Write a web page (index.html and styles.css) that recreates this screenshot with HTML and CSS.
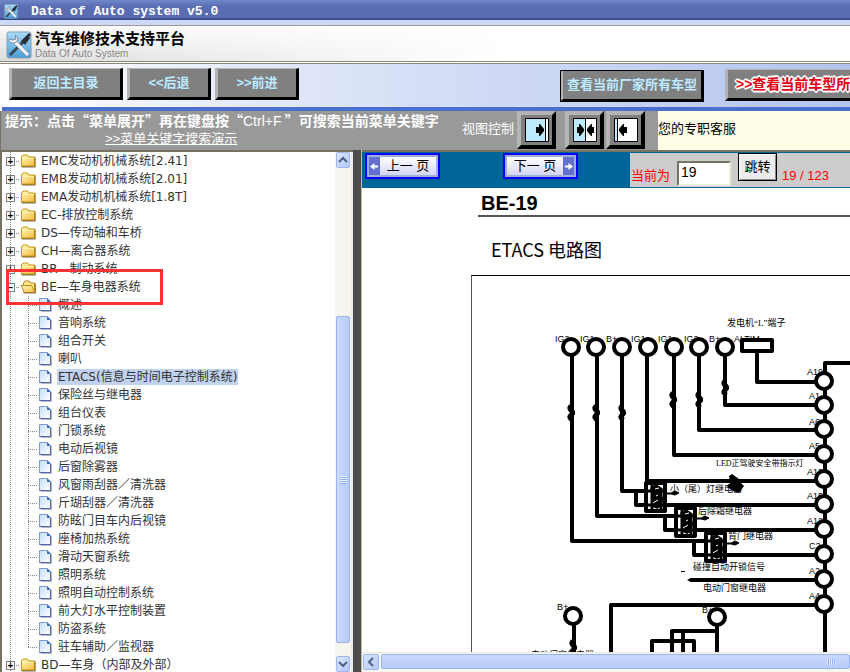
FILE: index.html
```
<!DOCTYPE html>
<html lang="zh-CN">
<head>
<meta charset="utf-8">
<title>Data of Auto system v5.0</title>
<link rel="stylesheet" href="styles.css">
</head>
<body>

<!-- Shared icons -->
<svg class="defs" xmlns="http://www.w3.org/2000/svg">
  <defs>
    <linearGradient id="folderFill" x1="0" y1="0" x2="1" y2="1">
      <stop offset="0" stop-color="#fffbc0"/>
      <stop offset="1" stop-color="#f3b93c"/>
    </linearGradient>
    <linearGradient id="fileFill" x1="0" y1="0" x2="1" y2="1">
      <stop offset="0" stop-color="#c4dcfa"/>
      <stop offset="1" stop-color="#ffffff"/>
    </linearGradient>
    <linearGradient id="logoFill" x1="0" y1="0" x2="0" y2="1">
      <stop offset="0" stop-color="#a8dcf8"/>
      <stop offset="1" stop-color="#4b9cd8"/>
    </linearGradient>
    <symbol id="folder" viewBox="0 0 18 18">
      <path d="M2 15.5h13.5v-9" fill="none" stroke="#b9b9b9"/>
      <path d="M1.5 14V5l1.5-2h4.500l1.500 2h5.500v9z" fill="url(#folderFill)" stroke="#c8961c"/>
      <path d="M2 6.500h12" stroke="#fff6a8"/>
      <path d="M1.500 14.500h13.500V5" fill="none" stroke="#a47c1c"/>
    </symbol>
    <symbol id="folderOpen" viewBox="0 0 18 18">
      <path d="M3 15.500h13" stroke="#b9b9b9"/>
      <path d="M3.500 14V5l1.500-2h4l1.500 2h4v9z" fill="#fbe98a" stroke="#b98a18"/>
      <path d="M1 7.500h10.500l3.500 7H4.500z" fill="url(#folderFill)" stroke="#b98a18"/>
      <path d="M15.500 5.500v9H5" fill="none" stroke="#a47c1c"/>
    </symbol>
    <symbol id="file" viewBox="0 0 18 18">
      <path d="M3 15.500h10.500V6" fill="none" stroke="#b4b8c4"/>
      <path d="M1.500 2.500h7.500l3.500 3.500v8.500h-11z" fill="url(#fileFill)" stroke="#7f9cd4"/>
      <path d="M12.500 6v8.500h-11" fill="none" stroke="#5a66a8"/>
      <path d="M9 2l4 4H9z" fill="#3a6fc0"/>
    </symbol>
    <symbol id="logo" viewBox="0 0 26 28">
      <rect x="1" y="1" width="24" height="26" rx="2" fill="url(#logoFill)" stroke="#8a9cb0"/>
      <path d="M4 24l16-16" stroke="#3b4650" stroke-width="3"/>
      <path d="M16 11l8-8M18 13l5-7" stroke="#26303a" stroke-width="3"/>
      <path d="M7 9l15 15" stroke="#8a98a4" stroke-width="4"/>
      <path d="M7 9l15 15" stroke="#f4f8fa" stroke-width="3"/>
      <path d="M3 8c0 4 4 5 7 3s2-6-1-7l1 4-3 1z" fill="#f0f4f6" stroke="#7c8a96"/>
    </symbol>
  </defs>
</svg>

<header class="titlebar">
  <svg class="titlebar-icon"><use href="#logo"/></svg>
  <span>Data of Auto system v5.0</span>
</header>

<div class="brand">
  <svg class="brand-icon"><use href="#logo"/></svg>
  <div>
    <h1>汽车维修技术支持平台</h1>
    <p>Data Of Auto System</p>
  </div>
</div>

<nav class="toolbar">
  <button class="tool tool-home">返回主目录</button>
  <button class="tool">&lt;&lt;后退</button>
  <button class="tool">&gt;&gt;前进</button>
  <button class="tool tool-maker">查看当前厂家所有车型</button>
  <button class="tool tool-model">&gt;&gt;查看当前车型所</button>
</nav>

<section class="tips">
  <div class="tips-text">
    <strong>提示：点击“菜单展开”再在键盘按“<span class="key">Ctrl+F</span> ”可搜索当前菜单关键字</strong>
    <a href="#search">&gt;&gt;菜单关键字搜索演示</a>
  </div>
  <span class="view-label">视图控制</span>
  <div class="views">
    <button class="view" aria-label="展开左侧">
      <svg viewBox="0 0 24 24"><path d="M.5.5h23v23H.5z" fill="#bdeaff" stroke="#000"/><path d="M20 1h3v22h-3z" fill="#fff"/><path d="M20.500 1v22" stroke="#000"/><path d="M11 9h3V6h1l4 5v2l-4 5h-1v-3h-3z"/></svg>
    </button>
    <button class="view view-split" aria-label="左右平分">
      <svg viewBox="0 0 24 24"><path d="M.5.5h23v23H.5z" fill="#fff" stroke="#000"/><path d="M1 1h11v22H1z" fill="#bdeaff"/><path d="M12.500 1v22" stroke="#000"/><path d="M4 9h2V6h1l4 5v2l-4 5H6v-3H4zM21 9h-2V6h-1l-4 5v2l4 5h1v-3h2z"/></svg>
    </button>
    <button class="view" aria-label="收起左侧">
      <svg viewBox="0 0 24 24"><path d="M.5.5h23v23H.5z" fill="#fff" stroke="#000"/><path d="M1 1h2v22H1z" fill="#bdeaff"/><path d="M3.500 1v22" stroke="#000"/><path d="M13 9h-3V6H9l-4 5v2l4 5h1v-3h3z"/></svg>
    </button>
  </div>
  <p class="service">您的专职客服</p>
</section>

<main class="frames">
  <aside class="menu">
    <ul class="tree">
      <li><div class="row"><button class="toggle">+</button><svg><use href="#folder"/></svg><a href="#emc"><span class="code">EMC</span>发动机机械系统<span class="code">[2.41]</span></a></div></li>
      <li><div class="row"><button class="toggle">+</button><svg><use href="#folder"/></svg><a href="#emb"><span class="code">EMB</span>发动机机械系统<span class="code">[2.01]</span></a></div></li>
      <li><div class="row"><button class="toggle">+</button><svg><use href="#folder"/></svg><a href="#ema"><span class="code">EMA</span>发动机机械系统<span class="code">[1.8T]</span></a></div></li>
      <li><div class="row"><button class="toggle">+</button><svg><use href="#folder"/></svg><a href="#ec"><span class="code">EC-</span>排放控制系统</a></div></li>
      <li><div class="row"><button class="toggle">+</button><svg><use href="#folder"/></svg><a href="#ds"><span class="code">DS—</span>传动轴和车桥</a></div></li>
      <li><div class="row"><button class="toggle">+</button><svg><use href="#folder"/></svg><a href="#ch"><span class="code">CH—</span>离合器系统</a></div></li>
      <li><div class="row"><button class="toggle">+</button><svg><use href="#folder"/></svg><a href="#br"><span class="code">BR—</span>制动系统</a></div></li>
      <li>
        <div class="row marked"><button class="toggle">−</button><svg><use href="#folderOpen"/></svg><a href="#be"><span class="code">BE—</span>车身电器系统</a></div>
        <ul>
          <li><div class="row"><svg><use href="#file"/></svg><a href="#be1">概述</a></div></li>
          <li><div class="row"><svg><use href="#file"/></svg><a href="#be2">音响系统</a></div></li>
          <li><div class="row"><svg><use href="#file"/></svg><a href="#be3">组合开关</a></div></li>
          <li><div class="row"><svg><use href="#file"/></svg><a href="#be4">喇叭</a></div></li>
          <li><div class="row"><svg><use href="#file"/></svg><a class="selected" href="#be5"><span class="code">ETACS(</span>信息与时间电子控制系统<span class="code">)</span></a></div></li>
          <li><div class="row"><svg><use href="#file"/></svg><a href="#be6">保险丝与继电器</a></div></li>
          <li><div class="row"><svg><use href="#file"/></svg><a href="#be7">组台仪表</a></div></li>
          <li><div class="row"><svg><use href="#file"/></svg><a href="#be8">门锁系统</a></div></li>
          <li><div class="row"><svg><use href="#file"/></svg><a href="#be9">电动后视镜</a></div></li>
          <li><div class="row"><svg><use href="#file"/></svg><a href="#be10">后窗除雾器</a></div></li>
          <li><div class="row"><svg><use href="#file"/></svg><a href="#be11">风窗雨刮器／清洗器</a></div></li>
          <li><div class="row"><svg><use href="#file"/></svg><a href="#be12">斤瑚刮器／清洗器</a></div></li>
          <li><div class="row"><svg><use href="#file"/></svg><a href="#be13">防眩门目车内后视镜</a></div></li>
          <li><div class="row"><svg><use href="#file"/></svg><a href="#be14">座椅加热系统</a></div></li>
          <li><div class="row"><svg><use href="#file"/></svg><a href="#be15">滑动天窗系统</a></div></li>
          <li><div class="row"><svg><use href="#file"/></svg><a href="#be16">照明系统</a></div></li>
          <li><div class="row"><svg><use href="#file"/></svg><a href="#be17">照明自动控制系统</a></div></li>
          <li><div class="row"><svg><use href="#file"/></svg><a href="#be18">前大灯水平控制装置</a></div></li>
          <li><div class="row"><svg><use href="#file"/></svg><a href="#be19">防盗系统</a></div></li>
          <li><div class="row"><svg><use href="#file"/></svg><a href="#be20">驻车辅助／监视器</a></div></li>
        </ul>
      </li>
      <li><div class="row"><button class="toggle">+</button><svg><use href="#folder"/></svg><a href="#bd"><span class="code">BD—</span>车身（内部及外部）</a></div></li>
    </ul>
    <div class="scroll scroll-y">
      <button class="scroll-btn" aria-label="向上"><svg viewBox="0 0 10 10"><path d="M1 7l4-4 4 4"/></svg></button>
      <div class="gap-before"></div>
      <div class="thumb"><i class="grip"></i></div>
      <div class="gap-after"></div>
      <button class="scroll-btn" aria-label="向下"><svg viewBox="0 0 10 10"><path d="M1 3l4 4 4-4"/></svg></button>
    </div>
  </aside>

  <div class="splitter"></div>

  <section class="content">
    <form class="pager">
      <button type="button" class="page prev"><span class="arrow"><svg viewBox="0 0 10 10"><path d="M0 5l5-4v3h4v2H5v3z"/></svg></span><span class="page-text">上一 页</span></button>
      <button type="button" class="page next"><span class="page-text">下一 页</span><span class="arrow"><svg viewBox="0 0 10 10"><path d="M10 5L5 1v3H1v2h4v3z"/></svg></span></button>
      <div class="jump">
        <label for="pageNo">当前为</label>
        <input id="pageNo" type="text" value="19">
        <button type="button" class="go">跳转</button>
        <span class="total">19 / 123</span>
      </div>
    </form>

    <article class="doc">
      <h2>BE-19</h2>
      <h3>ETACS 电路图</h3>
      <div class="sheet">
        <svg class="circuit" viewBox="472 276 420 396" xmlns="http://www.w3.org/2000/svg">
          <!-- Labels, partly hidden by the terminals -->
          <g class="pin">
            <text x="555" y="342">IG2</text>
            <text x="580" y="342">IG1</text>
            <text x="606" y="342">B+</text>
            <text x="631" y="342">IG1</text>
            <text x="658" y="342">IG1</text>
            <text x="684" y="342">IG2</text>
            <text x="709" y="342">B+</text>
            <text x="734" y="342">ALTIM</text>
            <text x="807" y="375">A19</text>
            <text x="809" y="399">A1</text>
            <text x="809" y="425">A6</text>
            <text x="809" y="449">A5</text>
            <text x="807" y="475">A13</text>
            <text x="807" y="499">A15</text>
            <text x="807" y="524">A12</text>
            <text x="809" y="549">C2</text>
            <text x="809" y="574">A2</text>
            <text x="809" y="599">A4</text>
            <text x="557" y="610">B+</text>
            <text x="702" y="613">B+</text>
          </g>
          <g class="note">
            <text x="727" y="326">发电机“L”端子</text>
            <text class="note-small" x="716" y="466">LED正驾驶安全带指示灯</text>
            <text x="670" y="492">小（尾）灯继电器</text>
            <text x="698" y="514">后除霜继电器</text>
            <text x="728" y="539">背门继电器</text>
            <text x="693" y="570">碰撞自动开锁信号</text>
            <text x="703" y="591">电动门窗继电器</text>
            <text x="531" y="658">电动门窗继电器</text>
          </g>
          <!-- Wires -->
          <g class="wire">
            <path d="M572 356V541H710"/>
            <path d="M597 356V516H680"/>
            <path d="M622 356V491H650"/>
            <path d="M647 356V481H816"/>
            <path d="M674 356V455H816"/>
            <path d="M699 356V430H816"/>
            <path d="M725 356V405H816"/>
            <path d="M757 352V382H816"/>
            <path d="M892 363H825V672"/>
            <path d="M636 491V505H816"/>
            <path d="M665 516V530H816"/>
            <path d="M694 541V555H816"/>
            <path d="M690 580H816"/>
            <path d="M611 672V605H816"/>
            <path d="M574 625V672M717 626V672M717 631H672V672M652 672V641H694V672M683 630V672"/>
            <rect x="742" y="340" width="30" height="11" fill="#fff"/>
          </g>
          <!-- Fuses -->
          <g class="fuse">
            <path d="M571 406c-4 4 4 5 1 8s-3 3 0 6"/>
            <path d="M596 406c-4 4 4 5 1 8s-3 3 0 6"/>
            <path d="M622 406c-4 4 4 5 1 8s-3 3 0 6"/>
            <path d="M673 393c-4 4 4 5 1 8s-3 3 0 6"/>
            <path d="M699 393c-4 4 4 5 1 8s-3 3 0 6"/>
            <path d="M725 381c-4 4 4 5 1 8s-3 3 0 6"/>
            <path d="M573 641c-4 4 4 5 1 8s-3 3 0 6"/>
          </g>
          <!-- Relays -->
          <g id="relays">
            <g id="relay">
              <path d="M646 483h19v28h-19z" fill="#fff" stroke="#000" stroke-width="4" stroke-linejoin="round"/>
              <path d="M652 484v26M661 488v22M647 491h18M647 505h18" stroke="#000" stroke-width="3"/>
              <path d="M650 488l6-4 6 4-1 5 2 5-1 8-5 3-6-3 1-6 1-5z"/>
              <path d="M653 503l5-3M655 489l4-1M656 496l2-1" stroke="#fff"/>
              <path d="M665 493h6l4-2 4 2-4 2-4-1h-6z" stroke="#000"/>
            </g>
            <use href="#relay" x="30" y="25"/>
            <use href="#relay" x="60" y="50"/>
          </g>
          <path d="M729 476l3-2 7 5 2 4 3 3-5 7-6-2-6-4 3-4z"/>
          <path d="M687 580l4-2h5v4h-5zM681 571h4v1h-4z"/>
          <!-- Terminals -->
          <g class="terminal">
            <circle cx="571" cy="347" r="8"/>
            <circle cx="596" cy="347" r="8"/>
            <circle cx="622" cy="347" r="8"/>
            <circle cx="648" cy="347" r="8"/>
            <circle cx="674" cy="347" r="8"/>
            <circle cx="699" cy="347" r="8"/>
            <circle cx="725" cy="347" r="8"/>
            <circle cx="824" cy="381" r="8"/>
            <circle cx="824" cy="405" r="8"/>
            <circle cx="824" cy="429" r="8"/>
            <circle cx="824" cy="454" r="8"/>
            <circle cx="824" cy="479" r="8"/>
            <circle cx="824" cy="504" r="8"/>
            <circle cx="824" cy="529" r="8"/>
            <circle cx="824" cy="554" r="8"/>
            <circle cx="824" cy="579" r="8"/>
            <circle cx="824" cy="604" r="8"/>
            <circle cx="573" cy="616" r="8"/>
            <circle cx="717" cy="617" r="8"/>
          </g>
        </svg>
      </div>
    </article>

    <div class="scroll scroll-x">
      <button class="scroll-btn" aria-label="向左"><svg viewBox="0 0 10 10"><path d="M7 1L3 5l4 4"/></svg></button>
      <div class="thumb"><i class="grip"></i></div>
    </div>
  </section>
</main>

</body>
</html>
```
FILE: styles.css
```
*,
*::before,
*::after {
  box-sizing: border-box;
}

body {
  margin: 0;
  height: 100vh;
  display: flex;
  flex-direction: column;
  overflow: hidden;
  background: #fff;
  font-family: "Liberation Sans", "Noto Sans CJK SC", sans-serif;
  font-size: 13px;
  line-height: 18px;
}

h1, h2, h3, p, ul {
  margin: 0;
  padding: 0;
}

ul {
  list-style: none;
}

button {
  padding: 0;
  font: inherit;
  cursor: pointer;
}

.defs {
  position: absolute;
  width: 0;
  height: 0;
}

/* Window title */
.titlebar {
  flex: none;
  height: 25px;
  display: flex;
  align-items: center;
  gap: 13px;
  padding: 3px 4px 0;
  border-bottom: 5px solid #ccd8f6;
  background: linear-gradient(#7088c8, #5a6eb4 30%, #5a6cb0 85%, #33427c);
  color: #fff;
  font-family: "Liberation Mono", monospace;
  font-weight: bold;
}

.titlebar-icon {
  width: 14px;
  height: 15px;
}

/* Brand strip */
.brand {
  flex: none;
  height: 39px;
  display: flex;
  align-items: center;
  gap: 3px;
  padding: 2px 6px 0;
  border-top: 1px solid #9c9c94;
  border-bottom: 3px double #8c8878;
  background: linear-gradient(90deg, rgba(255, 255, 255, 0), #fff 60%), linear-gradient(#fafafa, #dcdcdc);
}

.brand-icon {
  width: 26px;
  height: 28px;
}

.brand h1 {
  font-size: 15px;
  line-height: 18px;
}

.brand p {
  color: #888;
  font-size: 10px;
  line-height: 12px;
}

/* Toolbar */
.toolbar {
  flex: none;
  height: 47px;
  display: flex;
  align-items: flex-start;
  gap: 4px;
  padding: 4px 0 0 7px;
  margin-left: 2px;
  border-bottom: 4px solid #4a70cc;
  background: linear-gradient(90deg, #fff, #dfe6f8 35%, #b4c4ee);
  overflow: hidden;
}

.tool {
  flex: none;
  width: 84px;
  height: 32px;
  border: 3px solid;
  border-color: #b4b4b4 #000 #000 #b4b4b4;
  border-top-width: 1px;
  background: #808080;
  color: #bdeaff;
  font-weight: bold;
}

.tool-home {
  width: 114px;
}

.tool-maker {
  width: 144px;
  margin-top: 2px;
  margin-left: auto;
  outline: 1px solid #000;
  outline-offset: -1px;
}

.tool-model {
  width: 125px;
  margin-top: 1px;
  margin-left: 17px;
  padding-left: 8px;
  border-right: 0;
  color: #e60012;
  font-size: 14px;
  text-align: left;
  white-space: nowrap;
  overflow: hidden;
  text-shadow: -1px -1px #fff, 1px -1px #fff, -1px 1px #fff, 1px 1px #fff, 2px 0 #fff, -2px 0 #fff, 0 2px #fff, 0 -2px #fff;
}

/* Tips and view switches */
.tips {
  flex: none;
  height: 39px;
  display: flex;
  border-left: 1px solid #777264;
  background: #999;
  color: #fff;
  white-space: nowrap;
}

.tips-text {
  flex: none;
  width: 454px;
  padding-left: 4px;
}

.tips-text strong,
.tips-text a {
  display: block;
}

.tips-text strong {
  font-family: "Noto Sans CJK SC", sans-serif;
  font-size: 14px;
}

.tips-text .key {
  font-family: "Liberation Sans", sans-serif;
  font-weight: normal;
}

.tips-text a {
  width: max-content;
  margin-left: 100px;
  color: #fff;
}

.view-label {
  flex: none;
  width: 62px;
  padding: 9px 0 0 7px;
}

.views {
  flex: none;
  display: flex;
  gap: 2px;
  width: 141px;
}

.view {
  width: 39px;
  height: 38px;
  border: 4px solid;
  border-color: #b4b4b4 #000 #000 #b4b4b4;
  background: #808080;
}

.view-split {
  margin-left: 7px;
}

.view svg {
  display: block;
  width: 24px;
  height: 24px;
  margin: auto;
}

.service {
  flex: 1;
  padding-top: 9px;
  background: #ffffe8;
  color: #000;
}

/* Frames */
.frames {
  flex: 1;
  min-height: 0;
  display: flex;
}

.menu {
  flex: none;
  width: 353px;
  display: flex;
  border-top: 2px solid #777264;
  border-left: 2px solid #777264;
}

.splitter {
  flex: none;
  width: 9px;
  background: #4c4c4c;
  border-right: 1px solid #c0baa8;
}

/* Menu tree */
.tree {
  flex: 1;
  overflow: hidden;
  font-size: 12px;
  white-space: nowrap;
}

.tree ul {
  padding-left: 18px;
}

.tree li {
  background: linear-gradient(#888 50%, transparent 50%) 8px 0 / 1px 2px repeat-y;
}

/* the branch line stops at the last page */
.tree li li:last-child {
  background: repeating-linear-gradient(#888 0 1px, transparent 1px 2px) 8px 0 / 1px 9px no-repeat;
}

.row {
  display: flex;
  align-items: center;
  height: 18px;
  padding-left: 4px;
  background: repeating-linear-gradient(90deg, #888 0 1px, transparent 1px 2px) 8px 9px / 10px 1px no-repeat;
}

.tree ul .row {
  padding-left: 18px;
}

.row svg {
  flex: none;
  width: 18px;
  height: 18px;
}

.toggle {
  flex: none;
  width: 9px;
  height: 9px;
  margin-right: 5px;
  border: 1px solid #808080;
  background: #fff;
  color: #000;
  font-size: 10px;
  font-weight: bold;
  line-height: 7px;
}

.row a {
  flex: none;
  margin-left: 2px;
  padding: 0 1px;
  color: #333;
  line-height: 16px;
  text-decoration: none;
}

.tree ul .row a {
  margin-left: 1px;
}

.code {
  font-family: "DejaVu Sans", sans-serif;
}

.row a.selected {
  background: #c1d2ee;
}

/* Red frame round the open chapter */
.marked {
  position: relative;
}

.marked::after {
  content: "";
  position: absolute;
  left: 4px;
  top: -9px;
  width: 157px;
  height: 36px;
  border: 3px solid #ff3333;
}

/* Scrollbars */
.scroll {
  flex: none;
  display: flex;
  background: #f6f5f0;
}

.scroll-y {
  width: 18px;
  flex-direction: column;
  padding: 0 1px;
  border-right: 2px solid #eceade;
}

.scroll-x {
  height: 20px;
  padding: 1px 0 3px 1px;
  border-top: 1px solid #eceade;
}

.scroll-btn {
  flex: none;
  width: 16px;
  height: 16px;
  border: 1px solid #9cb8f0;
  border-radius: 2px;
  background: linear-gradient(135deg, #dce6ff, #b4c8fa);
}

.scroll-y .scroll-btn {
  width: 100%;
}

.scroll-btn svg {
  display: block;
  width: 10px;
  height: 10px;
  margin: auto;
  fill: none;
  stroke: #4d6185;
  stroke-width: 2;
}

.thumb {
  display: flex;
  align-items: center;
  justify-content: center;
  border: 1px solid #98b4ec;
  border-radius: 2px;
}

.scroll-y .thumb {
  flex: 327;
  background: linear-gradient(90deg, #cbd9fe, #b8cbfa);
}

.scroll-x .thumb {
  flex: 1;
  margin-left: 2px;
  padding-right: 14px;
  justify-content: flex-end;
  background: linear-gradient(#cbd9fe, #b8cbfa);
}

.scroll-x .thumb .grip {
  transform: rotate(90deg);
}

.gap-before {
  flex: 149;
}

.gap-after {
  flex: 13;
}

.grip {
  flex: none;
  width: 7px;
  height: 8px;
  background: repeating-linear-gradient(#eef4fe 0 1px, #8cb0f8 1px 2px);
}

/* Pager */
.content {
  flex: 1;
  min-width: 0;
  display: flex;
  flex-direction: column;
  border-top: 2px solid #777264;
}

.pager {
  flex: none;
  height: 36px;
  display: flex;
  align-items: flex-start;
  padding: 1px 0 1px 3px;
  background: #006699;
}

.page {
  flex: none;
  width: 75px;
  height: 26px;
  display: flex;
  align-items: stretch;
  padding: 2px;
  border: 2px solid #0000ff;
  background: #9fb0d8;
  color: #000;
}

.next {
  margin-left: 63px;
}

.page-text {
  flex: 1;
  background: linear-gradient(#fff, #d4d4f4);
  line-height: 18px;
  white-space: nowrap;
}

.arrow {
  width: 11px;
  display: flex;
  align-items: center;
  justify-content: center;
  background: #6470d0;
}

.arrow svg {
  width: 9px;
  height: 9px;
  fill: #fff;
}

.jump {
  flex: 1;
  align-self: stretch;
  display: flex;
  align-items: flex-start;
  margin-left: 52px;
  padding-left: 1px;
  background: #ccc;
  color: #f00;
  white-space: nowrap;
}

.jump label {
  width: 46px;
  padding-top: 14px;
}

.jump input {
  width: 54px;
  height: 25px;
  margin-top: 8px;
  padding: 0 2px 3px;
  border: 2px solid;
  border-color: #777264 #eceade #eceade #777264;
  background: #fff;
  font: 14px "Liberation Sans", sans-serif;
}

.go {
  width: 39px;
  height: 28px;
  margin: 0 5px 0 7px;
  border: 1px solid #000;
  background: #ececec;
  box-shadow: inset 1px 1px #fff, inset -1px -1px #888;
  color: #000;
}

.total {
  padding-top: 14px;
}

/* Document */
.doc {
  flex: 1;
  min-height: 0;
  overflow: hidden;
  padding-left: 109px;
  color: #000;
}

.doc h2 {
  margin-left: 7px;
  padding: 3px 3px 0;
  border-bottom: 2px solid #555;
  font-size: 20px;
  line-height: 24px;
}

.doc h3 {
  margin: 20px 0 14px 20px;
  font-family: "Noto Sans CJK SC", sans-serif;
  font-size: 18px;
  font-weight: normal;
  line-height: 24px;
}

.sheet {
  border-top: 1px solid #000;
  border-left: 1px solid #555;
}

.circuit {
  display: block;
  width: 420px;
  height: 396px;
}

.pin {
  font-size: 9px;
}

.note {
  font-family: "Liberation Serif", "Noto Sans CJK SC", serif;
  font-size: 9px;
}

.note-small {
  font-size: 8px;
}

.wire {
  fill: none;
  stroke: #000;
  stroke-width: 4;
  stroke-linejoin: round;
}

.fuse {
  fill: none;
  stroke: #000;
  stroke-width: 5;
}

.terminal {
  fill: #fff;
  stroke: #000;
  stroke-width: 4;
}
```
